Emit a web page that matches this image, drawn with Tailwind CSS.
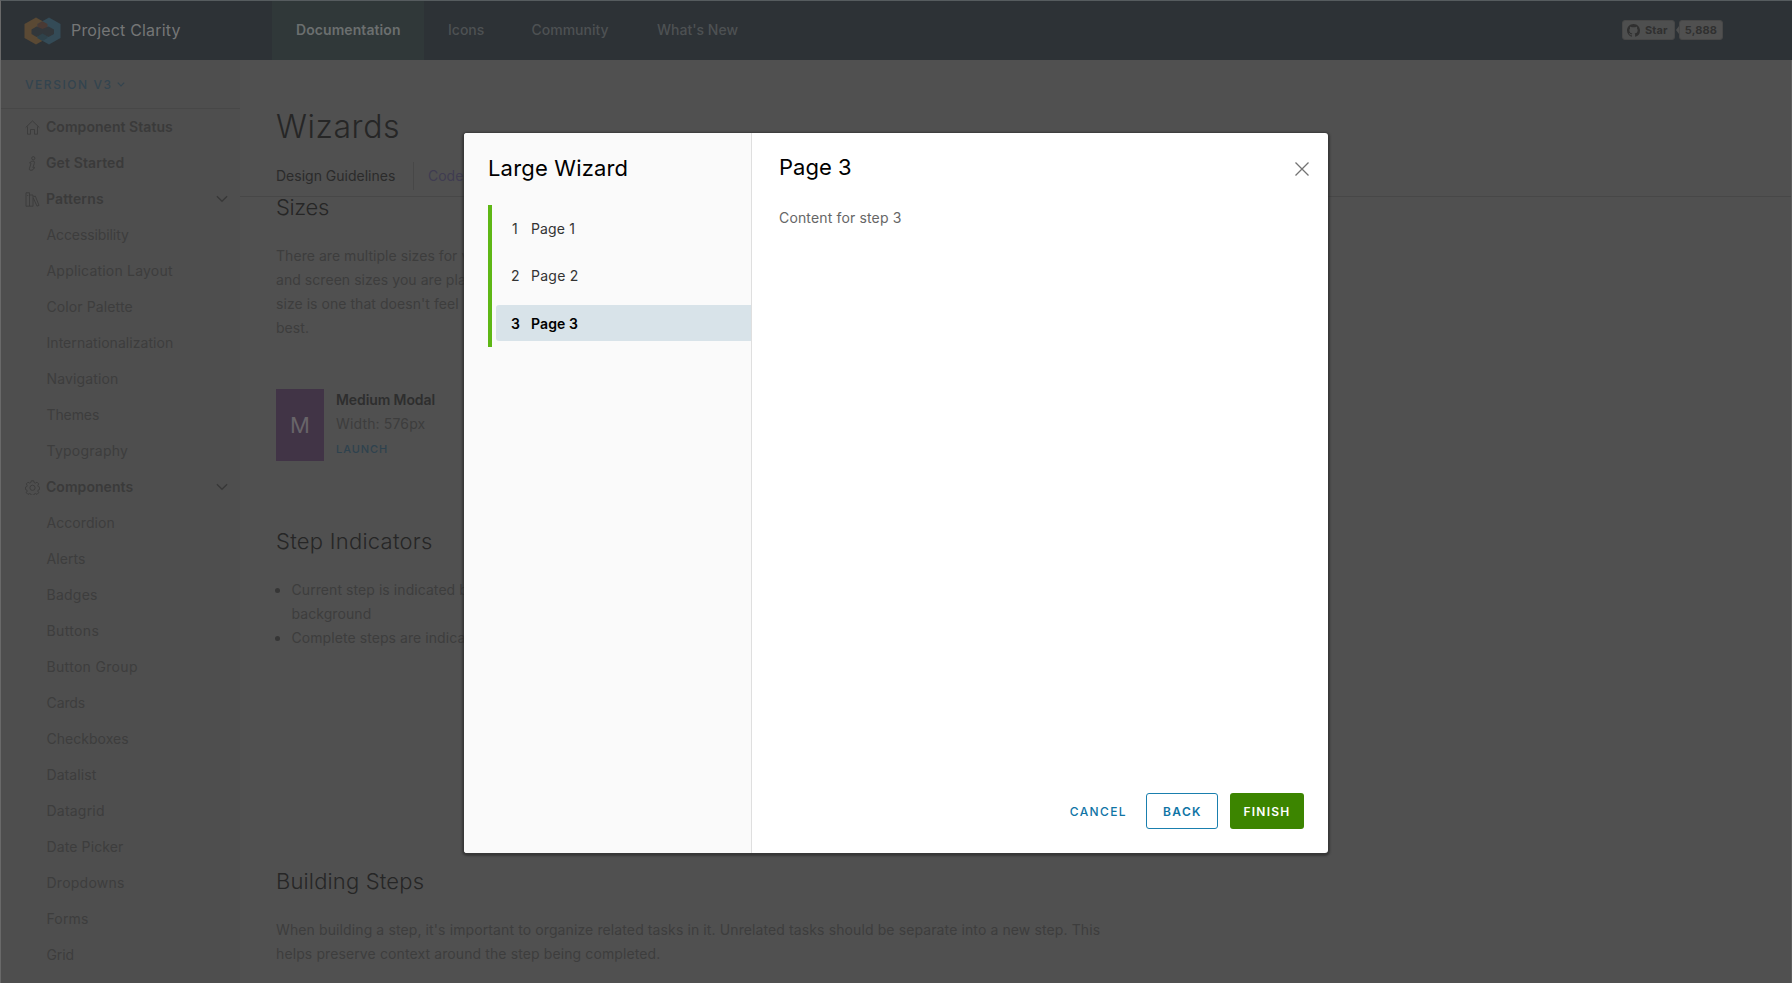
<!DOCTYPE html>
<html lang="en">
<head>
<meta charset="utf-8">
<title>Wizards - Project Clarity</title>
<script src="https://cdn.jsdelivr.net/npm/@tailwindcss/browser@4"></script>
</head>
<body class="relative h-[983px] w-[1792px] overflow-hidden bg-[#505050] font-['Inter',sans-serif] text-sm leading-6 text-[#3d3d3d] border-t border-t-[#565c5f] border-l border-l-[#696969]">

<header class="flex h-[59px] items-center bg-[#2d3236]">
  <div class="flex w-[271px] items-center pl-[23px]">
    <svg width="37" height="28" viewBox="0 0 37 28" class="shrink-0">
      <path d="M12 .5 23.500 7v14L12 27.500.500 21V7Z" fill="#5a4934"/>
      <path d="M25 .5 36.500 7v14L25 27.500 13.500 21V7Z" fill="#344b57"/>
      <path d="M18.500 4.200 23.500 7v4l-5 2-5-2V7Z" fill="#4a3a34"/>
      <path d="M12.500 9.500 18.500 12l6-2.500 5.500 3v4.500L24.500 20l-6-2.500-6 2.500L7.500 17v-4.500Z" fill="#32373b"/>
      <path d="m18.500 16.500 5 3V21l-5 3-5-3v-1.500Z" fill="#2f424a"/>
    </svg>
    <span class="pb-[2px] pl-[10px] text-base tracking-[0.19px] text-[#757676]">Project Clarity</span>
  </div>
  <nav class="flex h-full items-center font-medium text-[#4d5153] [&>a]:pb-px">
    <a class="flex h-full w-[152px] items-center pl-6 font-semibold tracking-[0.08px] text-[#6b6f6f] bg-[#303839]">Documentation</a>
    <a class="w-[84px] pl-6">Icons</a>
    <a class="w-[125px] pl-[23.500px]">Community</a>
    <a class="pl-6">What's New</a>
  </nav>
  <div class="ml-auto mr-[69px] flex items-center text-[11px] font-bold leading-[18px] text-[#303030] -mt-px">
    <span class="flex h-5 w-[53px] items-center gap-[5px] rounded-[3px] border border-[#474747] bg-[#4e4f4f] pl-[4px]">
      <svg width="13" height="13" viewBox="0 0 16 16" fill="#303030"><path fill-rule="evenodd" d="M8 0C3.580 0 0 3.580 0 8c0 3.540 2.290 6.530 5.470 7.590.4.070.55-.17.55-.38 0-.19-.01-.82-.01-1.490-2.010.37-2.530-.49-2.690-.94-.09-.23-.48-.94-.82-1.130-.28-.15-.68-.52-.01-.53.63-.01 1.080.58 1.230.82.72 1.210 1.870.87 2.330.66.070-.52.28-.87.51-1.070-1.780-.2-3.640-.89-3.640-3.950 0-.87.31-1.590.82-2.150-.08-.2-.36-1.020.08-2.120 0 0 .67-.21 2.200.82.64-.18 1.320-.27 2-.27s1.360.09 2 .27c1.530-1.040 2.200-.82 2.200-.82.44 1.100.16 1.920.08 2.120.51.56.82 1.270.82 2.150 0 3.070-1.870 3.750-3.650 3.950.29.25.54.73.54 1.480 0 1.070-.01 1.930-.01 2.200 0 .21.15.46.55.38A8.010 8.010 0 0 0 16 8c0-4.420-3.580-8-8-8Z"/></svg>
      <span class="tracking-[0.1px]">Star</span>
    </span>
    <svg width="4" height="8" viewBox="0 0 4 8" class="shrink-0"><path d="M4 0v8L1 4Z" fill="#4e4f4f"/></svg>
    <span class="flex h-5 w-11 items-center justify-center rounded-[3px] border border-[#474747] bg-[#505050] tracking-[0.14px]">5,888</span>
  </div>
</header>

<div class="flex h-[923px]">
  <aside class="w-[239px] shrink-0 bg-[#4e4e4e]">
    <div class="flex h-[49px] items-center gap-[4px] border-b border-[#474747] pl-[24px] text-xs font-medium tracking-[1.55px] text-[#33444f]">
      <span class="w-[88px] whitespace-nowrap pt-px">VERSION V3</span>
      <svg width="8" height="5" viewBox="0 0 8 5" fill="none" stroke="#33444f" stroke-width="1.200"><path d="m.8.700 3.200 3.200L7.200.700"/></svg>
    </div>
    <ul class="[&>li]:flex [&>li]:h-9 [&>li]:items-center [&>li]:pl-[45.500px]">
      <li class="gap-[6px] pl-[24px]! font-semibold tracking-[0.05px] text-[#3a3a3a]">
        <svg width="15" height="15" viewBox="0 0 15 15" fill="none" stroke="#3d3d3d"><path d="M.7 7.500 7.500.9l6.800 6.600M2.500 6.500v7.700h3V9.500h4v4.700h3V6.500"/></svg>Component Status</li>
      <li class="gap-[6px] pl-[24px]! font-semibold tracking-[0.12px] text-[#3a3a3a]">
        <svg width="15" height="15" viewBox="0 0 15 15" fill="none" stroke="#3d3d3d" stroke-linejoin="round"><circle cx="8.300" cy="2.200" r="1.600"/><path d="M4.500 7c1-1.500 3-2.200 4.500-1.700.7.300.5 1.200.3 2l-1.300 4.200c-.2.800.5.600 1.600-.2-.5 1.700-2 3-3.700 3-1.500 0-1.700-.9-1.400-2L5.900 7.600c.1-.8-.6-.6-1.400-.6Z"/></svg>Get Started</li>
      <li class="gap-[6px] pl-[24px]! font-semibold tracking-[0.16px] text-[#3a3a3a]">
        <svg width="15" height="15" viewBox="0 0 15 15" fill="none" stroke="#3d3d3d"><path d="M1 .8h3.500v13.400H1ZM4.500 3H8v11.200H4.500M8.300 4.700l2-.6 3.700 9.300-2 .7L8.300 6M2.700 3v1"/></svg>Patterns
        <svg class="ml-auto mr-[12px]" width="12" height="8" viewBox="0 0 12 8" fill="none" stroke="#383838" stroke-width="1.300"><path d="m.9 1.200 5.100 5.100 5.100-5.100"/></svg></li>
      <li class="tracking-[-0.1px]">Accessibility</li>
      <li class="tracking-[0.2px]">Application Layout</li>
      <li class="tracking-[0.11px]">Color Palette</li>
      <li class="tracking-[0.05px]">Internationalization</li>
      <li class="tracking-[0.13px]">Navigation</li>
      <li class="tracking-[-0.1px]">Themes</li>
      <li class="tracking-[0.25px]">Typography</li>
      <li class="gap-[6px] pl-[24px]! font-semibold tracking-[0.05px] text-[#3a3a3a]">
        <svg width="15" height="15" viewBox="0 0 15 15" fill="none" stroke="#3d3d3d" stroke-linejoin="round"><path d="m6.300.8h2.400l.5 1.800 1.200.5 1.600-.9 1.700 1.700-.9 1.600.5 1.200 1.300.4v2.300l-1.300.5-.5 1.200.9 1.600-1.700 1.700-1.600-.9-1.200.5-.5 1.300H6.300l-.5-1.300-1.200-.5-1.600.9-1.700-1.700.9-1.600-.5-1.200-1.200-.5V7.100l1.200-.4.5-1.200-.9-1.600L3 2.200l1.600.9 1.200-.5Z"/><circle cx="7.500" cy="7.800" r="2.600"/></svg>Components
        <svg class="ml-auto mr-[12px]" width="12" height="8" viewBox="0 0 12 8" fill="none" stroke="#383838" stroke-width="1.300"><path d="m.9 1.200 5.100 5.100 5.100-5.100"/></svg></li>
      <li class="tracking-[0.07px]">Accordion</li>
      <li class="tracking-[0.07px]">Alerts</li>
      <li class="tracking-[0.25px]">Badges</li>
      <li class="tracking-[0.35px]">Buttons</li>
      <li class="tracking-[0.32px]">Button Group</li>
      <li class="tracking-[-0.1px]">Cards</li>
      <li class="tracking-[0.02px]">Checkboxes</li>
      <li class="tracking-[0.08px]">Datalist</li>
      <li class="tracking-[0.22px]">Datagrid</li>
      <li class="tracking-[0.12px]">Date Picker</li>
      <li class="tracking-[0.25px]">Dropdowns</li>
      <li class="tracking-[0.15px]">Forms</li>
      <li class="tracking-[-0.1px]">Grid</li>
    </ul>
  </aside>

  <main class="flex-1 border-r border-[#5f5f5f] whitespace-nowrap">
    <h1 class="h-[86px] pl-9 pt-[47px] text-[32px] font-light leading-10 tracking-[0.57px] text-[#262626]">Wizards</h1>
    <div class="flex h-[51px] items-start border-b border-[#474747] pl-9 pt-4">
      <a class="w-[138px] border-r border-[#474747] py-[2px] text-[#2b2b2b]">Design Guidelines</a>
      <a class="py-[2px] pl-[14px] text-[#3f3c50]">Code</a>
    </div>
    <div class="pl-9">
      <h2 class="-mt-[2px] text-[22px] font-light leading-6 tracking-[-0.35px] text-[#262626]">Sizes</h2>
      <p class="mt-[25px] tracking-[0.05px]">There are multiple sizes for w<br>and screen sizes you are pla<br>size is one that doesn't feel<br>best.</p>
      <div class="mt-[49px] flex gap-[12px]">
        <div class="flex h-[72px] w-12 items-center justify-center bg-[#413446] text-[22px] text-[#686469]">M</div>
        <div class="-mt-px">
          <p class="font-semibold text-[#2e2e2e] tracking-[-0.1px]">Medium Modal</p>
          <p class="tracking-[0.15px]">Width: 576px</p>
          <p class="pt-px text-[11px] font-medium tracking-[0.93px] text-[#2e424e]">LAUNCH</p>
        </div>
      </div>
      <h2 class="mt-[68px] text-[22px] font-light leading-6 tracking-[0.25px] text-[#262626]">Step Indicators</h2>
      <ul class="mt-[25px] tracking-[0.07px]">
        <li class="flex gap-[11.500px]"><span class="mt-[10px] -ml-px h-[5px] w-[5px] shrink-0 rounded-full bg-[#363636]"></span><span>Current step is indicated b<br>background</span></li>
        <li class="flex gap-[11.500px]"><span class="mt-[10px] -ml-px h-[5px] w-[5px] shrink-0 rounded-full bg-[#363636]"></span><span>Complete steps are indica</span></li>
      </ul>
      <h2 class="mt-[219px] text-[22px] font-light leading-6 tracking-[0.16px] text-[#262626]">Building Steps</h2>
      <p class="mt-[25px] tracking-[0.11px]">When building a step, it's important to organize related tasks in it. Unrelated tasks should be separate into a new step. This<br>helps preserve context around the step being completed.</p>
    </div>
  </main>
</div>

<section role="dialog" class="absolute left-[463px] top-[132px] flex h-[720px] w-[864px] overflow-hidden rounded-[3px] bg-white shadow-[0_1px_2px_2px_rgba(40,40,40,0.6)]">
  <div class="w-[288px] border-r border-[#dfdfdf] bg-[#fafafa] pl-6 pt-[23px]">
    <h2 class="text-[22px] leading-6 tracking-[0.18px] text-black">Large Wizard</h2>
    <ol class="mt-[25px] flex h-[142px] flex-col gap-[11px] border-l-4 border-[#5eb715] pl-1 pt-[6px] text-[#333] [&>li]:flex [&>li]:h-9 [&>li]:items-center [&>li]:pl-[15px]">
      <li class="tracking-[0.15px]"><span class="w-5 pl-px">1</span>Page 1</li>
      <li class="tracking-[0.25px]"><span class="w-5">2</span>Page 2</li>
      <li class="rounded-l-[3px] bg-[#d8e3e9] pt-px font-semibold tracking-[0.1px] text-black"><span class="w-5">3</span>Page 3</li>
    </ol>
  </div>
  <div class="flex flex-1 flex-col p-6 pl-[27px]">
    <div class="flex h-6 items-start justify-between">
      <h3 class="-mt-[2px] text-[22px] leading-6 text-black">Page 3</h3>
      <svg class="mr-[-5px] mt-[5px]" width="14" height="14" viewBox="0 0 14 14" fill="none" stroke="#737373" stroke-width="1.300"><path d="m.5.500 13 13m0-13-13 13"/></svg>
    </div>
    <p class="mt-[25px] tracking-[0.15px] text-[#666]">Content for step 3</p>
    <div class="mt-auto flex items-center justify-end text-xs">
      <button class="mr-[19px] pt-px font-medium tracking-[1.37px] text-[#0f74a5]">CANCEL</button>
      <button class="mr-3 h-9 w-[72px] rounded-[3px] border border-[#1a7fae] pl-px pt-px font-semibold tracking-[1.33px] text-[#0f74a5]">BACK</button>
      <button class="h-9 w-[74px] rounded-[3px] bg-[#3c8500] pt-px font-semibold tracking-[1.25px] text-white">FINISH</button>
    </div>
  </div>
</section>
</body>
</html>
